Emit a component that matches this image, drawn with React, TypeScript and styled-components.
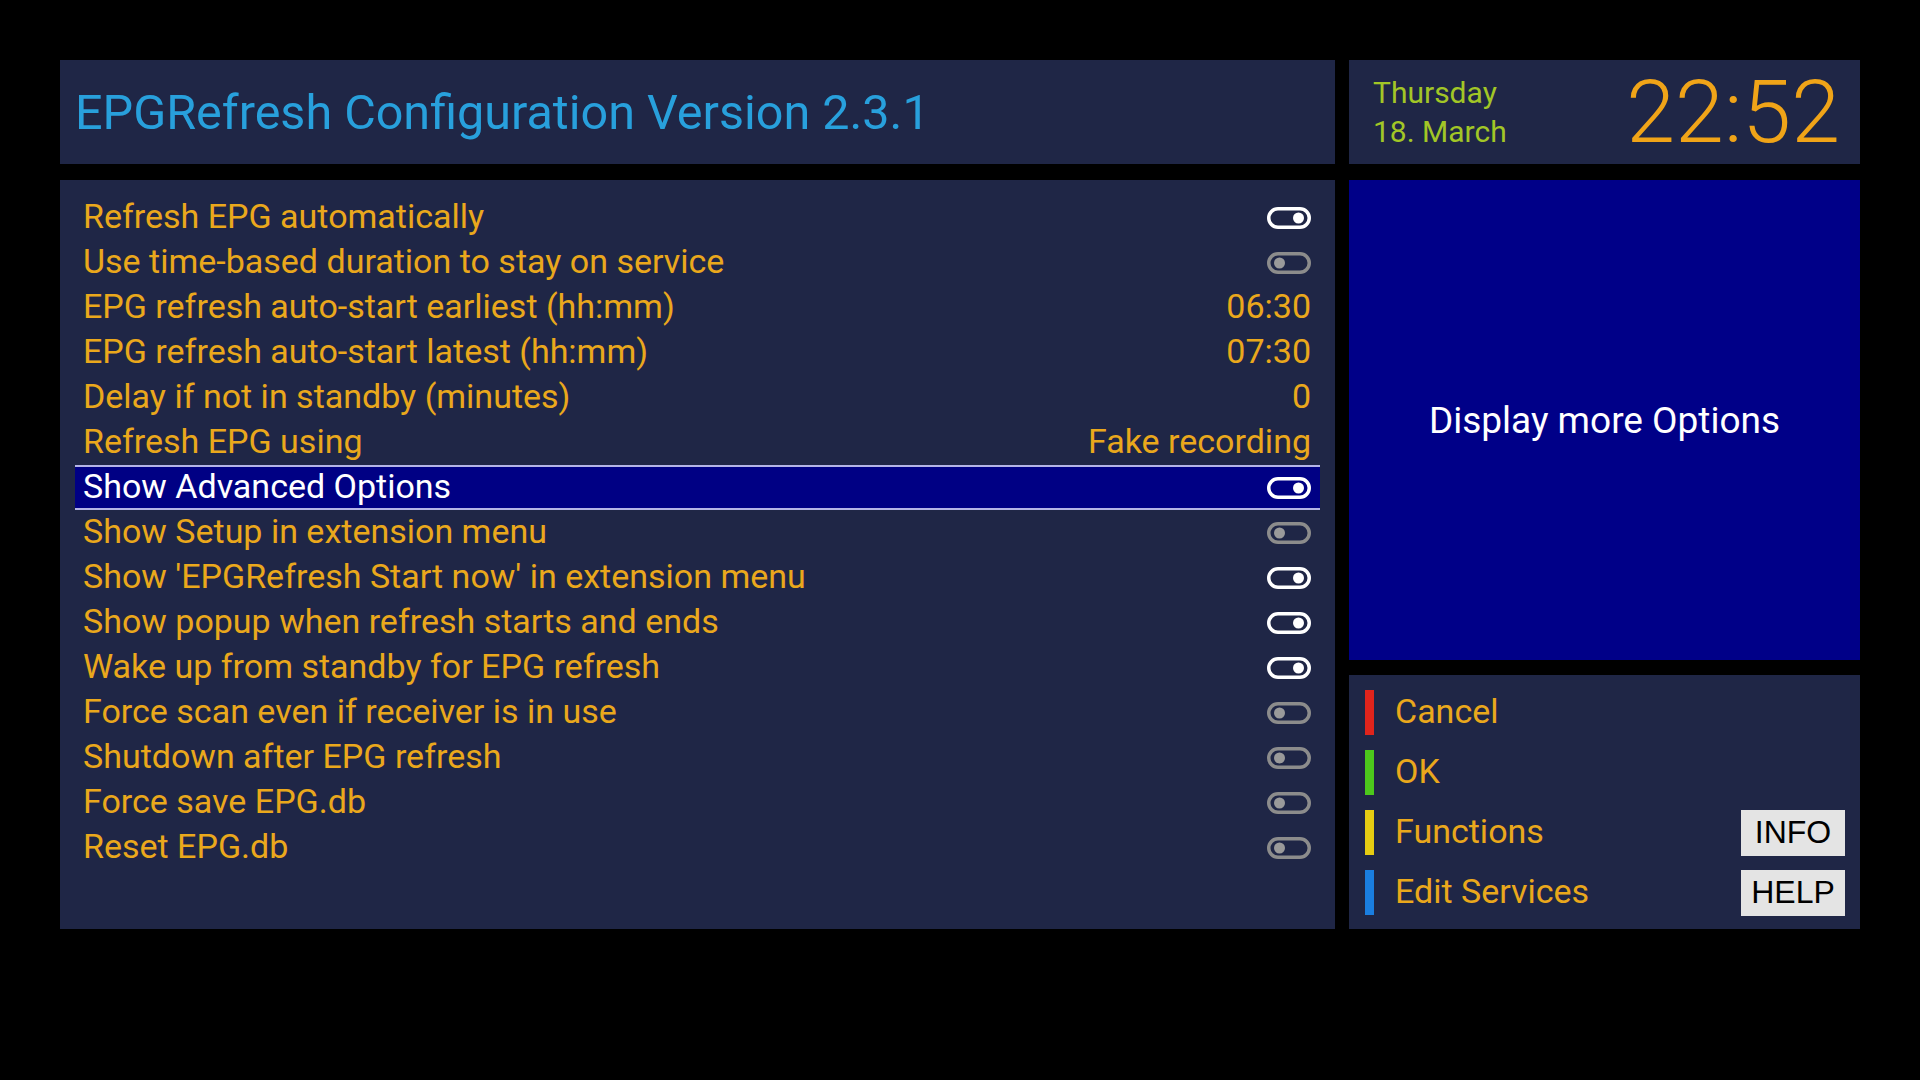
import React from 'react'
import styled, { createGlobalStyle } from 'styled-components'

const GlobalStyle = createGlobalStyle`
  html, body {
    margin: 0;
    padding: 0;
    background: #000;
  }
  body {
    font-family: Roboto, "Noto Sans", sans-serif;
  }
`

const Screen = styled.div`
  width: 1920px;
  height: 1080px;
  box-sizing: border-box;
  padding: 60px 0 0 60px;
  background: #000;
  display: grid;
  grid-template-columns: 1275px 511px;
  grid-template-rows: 104px 749px;
  column-gap: 14px;
  row-gap: 16px;
`

const Panel = styled.div`
  background: #1f2646;
  box-sizing: border-box;
`

const TitleBar = styled(Panel)`
  display: flex;
  align-items: center;
  padding-left: 15px;
  color: #28a0dc;
  font-size: 48.5px;
`

const ClockBar = styled(Panel)`
  display: flex;
  align-items: center;
  justify-content: space-between;
  padding: 0 20px 0 24px;
`

const DateText = styled.div`
  color: #a2c626;
  font-size: 30px;
  line-height: 39px;
`

const Clock = styled.div`
  color: #f0a418;
  font-size: 88px;
  font-weight: 300;
  line-height: 1;
`

const ListPanel = styled(Panel)`
  padding: 15px 15px;
  display: flex;
  flex-direction: column;
`

const Row = styled.div<{ $active?: boolean }>`
  height: 45px;
  box-sizing: border-box;
  display: flex;
  align-items: center;
  justify-content: space-between;
  padding: 0 9px 0 8px;
  font-size: 34px;
  color: ${(p) => (p.$active ? '#ffffff' : '#eaa81c')};
  background: ${(p) => (p.$active ? '#000084' : 'transparent')};
  border-top: 2px solid ${(p) => (p.$active ? '#b4b4e6' : 'transparent')};
  border-bottom: 2px solid ${(p) => (p.$active ? '#b4b4e6' : 'transparent')};
`

const RowText = styled.span`
  padding-bottom: 3px;
`

const SideColumn = styled.div`
  display: flex;
  flex-direction: column;
  gap: 15px;
`

const InfoPanel = styled.div`
  height: 480px;
  background: #000088;
  display: flex;
  align-items: center;
  justify-content: center;
  color: #ffffff;
  font-size: 37px;
`

const ButtonPanel = styled(Panel)`
  flex: 1;
  padding: 15px 15px 14px 16px;
  display: flex;
  flex-direction: column;
  gap: 15px;
`

const ButtonRow = styled.div`
  height: 45px;
  display: flex;
  align-items: center;
`

const ColorBar = styled.div<{ $color: string }>`
  width: 9px;
  height: 45px;
  background: ${(p) => p.$color};
`

const ButtonLabel = styled.div`
  flex: 1;
  margin-left: 21px;
  padding-bottom: 3px;
  color: #eaa81c;
  font-size: 34px;
`

const Key = styled.div`
  width: 104px;
  height: 46px;
  background: #e4e4e4;
  color: #000;
  font-family: "Liberation Sans", Arial, sans-serif;
  font-size: 32px;
  display: flex;
  align-items: center;
  justify-content: center;
`

const Toggle = ({ on, active }: { on: boolean; active?: boolean }) => {
  const c = on ? '#ffffff' : '#8c8c8c'
  return (
    <svg width="44" height="22" viewBox="0 0 44 22">
      <rect
        x="1.75"
        y="1.75"
        width="40.5"
        height="18.5"
        rx="9.25"
        fill={active ? '#000084' : 'none'}
        stroke={c}
        strokeWidth="3.5"
      />
      <circle cx={on ? 31.5 : 12.5} cy="11" r="5.5" fill={on ? '#ffffff' : '#9a9a9a'} />
    </svg>
  )
}

type Item = { label: string; value?: string; toggle?: boolean }

const items: Item[] = [
  { label: 'Refresh EPG automatically', toggle: true },
  { label: 'Use time-based duration to stay on service', toggle: false },
  { label: 'EPG refresh auto-start earliest (hh:mm)', value: '06:30' },
  { label: 'EPG refresh auto-start latest (hh:mm)', value: '07:30' },
  { label: 'Delay if not in standby (minutes)', value: '0' },
  { label: 'Refresh EPG using', value: 'Fake recording' },
  { label: 'Show Advanced Options', toggle: true },
  { label: 'Show Setup in extension menu', toggle: false },
  { label: "Show 'EPGRefresh Start now' in extension menu", toggle: true },
  { label: 'Show popup when refresh starts and ends', toggle: true },
  { label: 'Wake up from standby for EPG refresh', toggle: true },
  { label: 'Force scan even if receiver is in use', toggle: false },
  { label: 'Shutdown after EPG refresh', toggle: false },
  { label: 'Force save EPG.db', toggle: false },
  { label: 'Reset EPG.db', toggle: false },
]

const buttons = [
  { label: 'Cancel', color: '#e0241c' },
  { label: 'OK', color: '#4cc81c' },
  { label: 'Functions', color: '#e6cc12', key: 'INFO' },
  { label: 'Edit Services', color: '#1a7ee0', key: 'HELP' },
]

const SELECTED = 6

export default function App() {
  return (
    <>
      <GlobalStyle />
      <Screen>
        <TitleBar>EPGRefresh Configuration Version 2.3.1</TitleBar>
        <ClockBar>
          <DateText>
            <div>Thursday</div>
            <div>18. March</div>
          </DateText>
          <Clock>22:52</Clock>
        </ClockBar>

        <ListPanel>
          {items.map((it, i) => (
            <Row key={it.label} $active={i === SELECTED}>
              <RowText>{it.label}</RowText>
              {it.toggle !== undefined ? (
                <Toggle on={it.toggle} active={i === SELECTED} />
              ) : (
                <RowText>{it.value}</RowText>
              )}
            </Row>
          ))}
        </ListPanel>

        <SideColumn>
          <InfoPanel>Display more Options</InfoPanel>
          <ButtonPanel>
            {buttons.map((b) => (
              <ButtonRow key={b.label}>
                <ColorBar $color={b.color} />
                <ButtonLabel>{b.label}</ButtonLabel>
                {b.key && <Key>{b.key}</Key>}
              </ButtonRow>
            ))}
          </ButtonPanel>
        </SideColumn>
      </Screen>
    </>
  )
}
